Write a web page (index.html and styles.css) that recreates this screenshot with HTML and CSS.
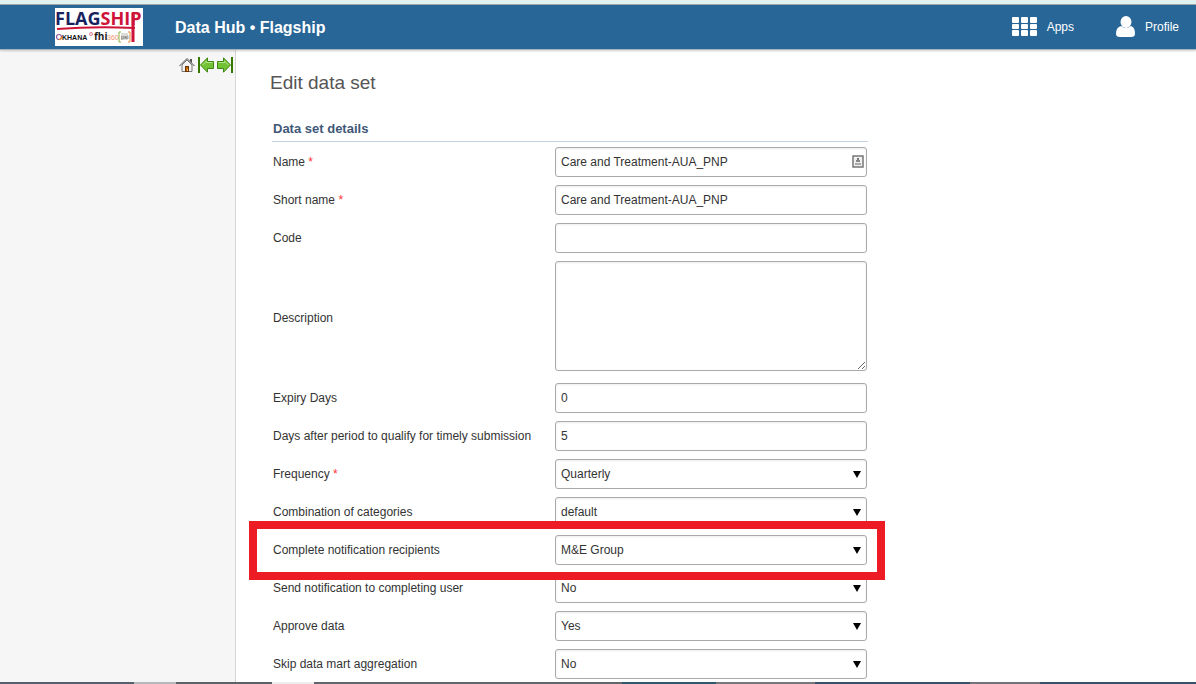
FILE: index.html
```
<!DOCTYPE html>
<html lang="en">
<head>
    <meta charset="UTF-8">
    <meta name="viewport" content="width=device-width, initial-scale=1.0">
    <title>Data Hub - Edit data set</title>
    <link rel="stylesheet" href="styles.css">
</head>
<body>
    <header class="header">
        <a class="logo" href="#" aria-label="Flagship">
            <svg width="88" height="38" viewBox="0 0 88 38">
                <rect width="88" height="38" fill="#fff"/>
                <text class="logo-name" x="0" y="17" fill="#17225f">FLAG<tspan fill="#cf1238">SHIP</tspan></text>
                <path d="M2 21Q40 18 80 20" fill="none" stroke="#cf1238" stroke-width="2"/>
                <path d="M78 5V34" stroke="#cf1238" stroke-width="3"/>
                <circle cx="4" cy="29" r="2.5" fill="none" stroke="#8a5a9c" stroke-width="1.2"/>
                <path d="M4 31.500A2.500 2.500 0 0 0 6.500 29" fill="none" stroke="#f09030" stroke-width="1.400"/>
                <text class="logo-khana" x="7" y="32" fill="#111">KHANA</text>
                <circle cx="36" cy="26" r="1.500" fill="none" stroke="#d77b93"/>
                <text class="logo-fhi" x="39" y="32" fill="#222">fhi</text>
                <text class="logo-360" x="52" y="32" fill="#ef9470">360</text>
                <path d="M66 24H64V34H66" fill="none" stroke="#8eb23c"/>
                <path d="M73 24H75V34H73" fill="none" stroke="#ef8a32"/>
                <rect x="66" y="25" width="7" height="7" fill="#dcdcd8"/>
                <text class="logo-psi" x="66" y="31" fill="#555">psi</text>
            </svg>
        </a>
        <span class="header-title">Data Hub &bull; Flagship</span>
        <nav class="header-menu">
            <a class="menu-link" href="#">
                <svg width="26" height="20" viewBox="0 0 26 20" fill="#fff">
                    <rect x="0" y="0" width="7" height="6" rx="1"/>
                    <rect x="9" y="0" width="7" height="6" rx="1"/>
                    <rect x="18" y="0" width="7" height="6" rx="1"/>
                    <rect x="0" y="7" width="7" height="5" rx="1"/>
                    <rect x="9" y="7" width="7" height="5" rx="1"/>
                    <rect x="18" y="7" width="7" height="5" rx="1"/>
                    <rect x="0" y="13" width="7" height="6" rx="1"/>
                    <rect x="9" y="13" width="7" height="6" rx="1"/>
                    <rect x="18" y="13" width="7" height="6" rx="1"/>
                </svg>
                Apps
            </a>
            <a class="menu-link" href="#">
                <svg width="20" height="22" viewBox="0 0 20 22" fill="#fff">
                    <ellipse cx="10" cy="6" rx="5.500" ry="6"/>
                    <path d="M5 10Q0 11 0 18Q0 21 4 21H15Q19 21 19 18Q19 11 15 10Q10 14 5 10Z"/>
                </svg>
                Profile
            </a>
        </nav>
    </header>

    <div class="page">
        <aside class="sidebar">
            <a href="#" aria-label="Home">
                <svg width="16" height="16" viewBox="0 0 16 16">
                    <path d="M11 2H13V6L11 4Z" fill="#555"/>
                    <path d="M3 8L8 3L13 8V14.500H3Z" fill="#f4f4f4" stroke="#777"/>
                    <path d="M.500 9L8 1.500L15.500 9" fill="none" stroke="#444"/>
                    <rect x="6.500" y="9.500" width="3" height="5" fill="#c4660c" stroke="#6b3305"/>
                    <rect x="8" y="12" width="1" height="2" fill="#ffbe3c"/>
                </svg>
            </a>
            <a href="#" aria-label="Hide menu">
                <svg width="16" height="16" viewBox="0 0 16 16">
                    <rect width="2" height="16" fill="#347800"/>
                    <path d="M2.500 8L9.500 .800V4.500H15.500V11.500H9.500V15.200Z" fill="#73c235" stroke="#3d8512"/>
                    <path d="M4.500 8L8.500 4V5.500H14.500" fill="none" stroke="#b4e48c"/>
                </svg>
            </a>
            <a href="#" aria-label="Show menu">
                <svg width="16" height="16" viewBox="0 0 16 16">
                    <rect x="14" width="2" height="16" fill="#347800"/>
                    <path d="M13.500 8L6.500 .800V4.500H.500V11.500H6.500V15.200Z" fill="#73c235" stroke="#3d8512"/>
                    <path d="M1.500 5.500H7.500V4L11.500 8" fill="none" stroke="#b4e48c"/>
                </svg>
            </a>
        </aside>

        <main class="content">
            <h1>Edit data set</h1>
            <form class="form">
                <h2>Data set details</h2>
                <div class="row">
                    <label for="name">Name <em>*</em></label>
                    <div class="field">
                        <input type="text" id="name" value="Care and Treatment-AUA_PNP">
                        <svg class="autofill" width="12" height="13" viewBox="0 0 12 13">
                            <rect x="1" y="1" width="10" height="11" fill="#f0f0f0" stroke="#777" stroke-width="1.500"/>
                            <rect x="5" y="3" width="2" height="2" fill="#777"/>
                            <rect x="4" y="5" width="4" height="2" fill="#888"/>
                            <rect x="3" y="8" width="6" height="2" fill="#aaa"/>
                        </svg>
                    </div>
                </div>
                <div class="row">
                    <label for="shortName">Short name <em>*</em></label>
                    <div class="field"><input type="text" id="shortName" value="Care and Treatment-AUA_PNP"></div>
                </div>
                <div class="row">
                    <label for="code">Code</label>
                    <div class="field"><input type="text" id="code"></div>
                </div>
                <div class="row">
                    <label for="description">Description</label>
                    <div class="field"><textarea id="description"></textarea></div>
                </div>
                <div class="row">
                    <label for="expiryDays">Expiry Days</label>
                    <div class="field"><input type="text" id="expiryDays" value="0"></div>
                </div>
                <div class="row">
                    <label for="timelyDays">Days after period to qualify for timely submission</label>
                    <div class="field"><input type="text" id="timelyDays" value="5"></div>
                </div>
                <div class="row">
                    <label for="frequency">Frequency <em>*</em></label>
                    <div class="field select"><select id="frequency"><option>Quarterly</option></select></div>
                </div>
                <div class="row">
                    <label for="categoryCombo">Combination of categories</label>
                    <div class="field select"><select id="categoryCombo"><option>default</option></select></div>
                </div>
                <div class="row highlight">
                    <label for="recipients">Complete notification recipients</label>
                    <div class="field select"><select id="recipients"><option>M&amp;E Group</option></select></div>
                </div>
                <div class="row">
                    <label for="notifyUser">Send notification to completing user</label>
                    <div class="field select"><select id="notifyUser"><option>No</option><option>Yes</option></select></div>
                </div>
                <div class="row">
                    <label for="approveData">Approve data</label>
                    <div class="field select"><select id="approveData"><option>Yes</option><option>No</option></select></div>
                </div>
                <div class="row">
                    <label for="skipAggregation">Skip data mart aggregation</label>
                    <div class="field select"><select id="skipAggregation"><option>No</option><option>Yes</option></select></div>
                </div>
            </form>
        </main>
    </div>
    <div class="bottom-strip"></div>
</body>
</html>
```

FILE: styles.css
```
* {
    box-sizing: border-box;
}

body {
    display: flex;
    flex-direction: column;
    height: 100vh;
    margin: 0;
    overflow: hidden;
    background-color: #fff;
    color: #333;
    font-family: "Liberation Sans", Arial, sans-serif;
    font-size: 12px;
    border-top: 4px solid #e2f2ee;
}

/* Header */
.header {
    display: flex;
    flex: none;
    align-items: center;
    height: 46px;
    padding: 0 17px 0 55px;
    background-color: #276696;
    border-top: 1px solid #a0a5a5;
    border-bottom: 1px solid #a9b4bd;
    box-shadow: 0 1px 2px rgba(0, 0, 0, 0.2);
    color: #fff;
    z-index: 1;
}

.logo {
    display: flex;
    margin-right: 32px;
}

.logo svg {
    overflow: visible;
}

.logo-name {
    font-family: "Open Sans", sans-serif;
    font-size: 18px;
    font-weight: bold;
}

.logo-khana {
    font-size: 7px;
    font-weight: bold;
}

.logo-fhi {
    font-family: "Open Sans", sans-serif;
    font-size: 10px;
    font-weight: bold;
}

.logo-360 {
    font-size: 7px;
}

.logo-psi {
    font-size: 6px;
}

.header-title {
    padding-top: 1px;
    font-size: 16px;
    font-weight: bold;
}

.header-menu {
    display: flex;
    gap: 42px;
    margin-left: auto;
}

.menu-link {
    display: flex;
    align-items: center;
    gap: 9px;
    color: #fff;
    text-decoration: none;
}

/* Page */
.page {
    display: flex;
    flex: 1;
    min-height: 0;
}

.sidebar {
    display: flex;
    flex: none;
    justify-content: flex-end;
    gap: 3px;
    width: 236px;
    padding: 7px 2px;
    background-color: #f6f6f6;
    border-right: 1px solid #d5d5d5;
}

.sidebar a {
    height: 16px;
}

.content {
    flex: 1;
    padding: 20px 34px 0;
}

h1 {
    margin: 0;
    color: #555;
    font-size: 19px;
    font-weight: normal;
    line-height: 26px;
}

/* Form */
.form {
    max-width: 598px;
    padding: 24px 0 0 2px;
}

h2 {
    margin: 0 0 1px;
    padding: 0 0 4px 1px;
    border-bottom: 1px solid #c5d0e0;
    color: #3f5878;
    font-size: 13px;
    line-height: 17px;
}

.row {
    display: flex;
    position: relative;
    align-items: center;
    justify-content: space-between;
    padding: 4px 1px;
}

.row em {
    color: #f33;
    font-style: normal;
}

.field {
    position: relative;
    width: 312px;
}

input,
select,
textarea {
    display: block;
    width: 100%;
    height: 30px;
    margin: 0;
    padding: 0 5px;
    appearance: none;
    background-color: #fff;
    border: 1px solid #aaa;
    border-radius: 3px;
    box-shadow: inset 0 1px 2px rgba(0, 0, 0, 0.08);
    color: #333;
    font-family: inherit;
    font-size: 12px;
}

textarea {
    height: 110px;
    margin-bottom: 4px;
    resize: both;
}

.autofill {
    position: absolute;
    top: 8px;
    right: 3px;
}

/* Drop-down arrow */
.select::after {
    content: "";
    position: absolute;
    top: 12px;
    right: 6px;
    border: 4px solid transparent;
    border-top: 7px solid #000;
    border-bottom: 0;
    pointer-events: none;
}

/* Red frame round the setting */
.highlight::after {
    content: "";
    position: absolute;
    top: -10px;
    right: -17px;
    bottom: -11px;
    left: -23px;
    border: 8px solid #ed1c24;
    pointer-events: none;
    z-index: 1;
}

.bottom-strip {
    flex: none;
    height: 2px;
    background: linear-gradient(to right, #56616f 134px, #b5b8bb 134px 176px, #5d6168 176px 272px, #eee 272px 314px, #62666d 314px 622px, #31596d 622px 716px, #77777b 716px 815px, #3b526f 815px 970px, #72747a 970px 1040px, #3b526f 1040px);
}
```
